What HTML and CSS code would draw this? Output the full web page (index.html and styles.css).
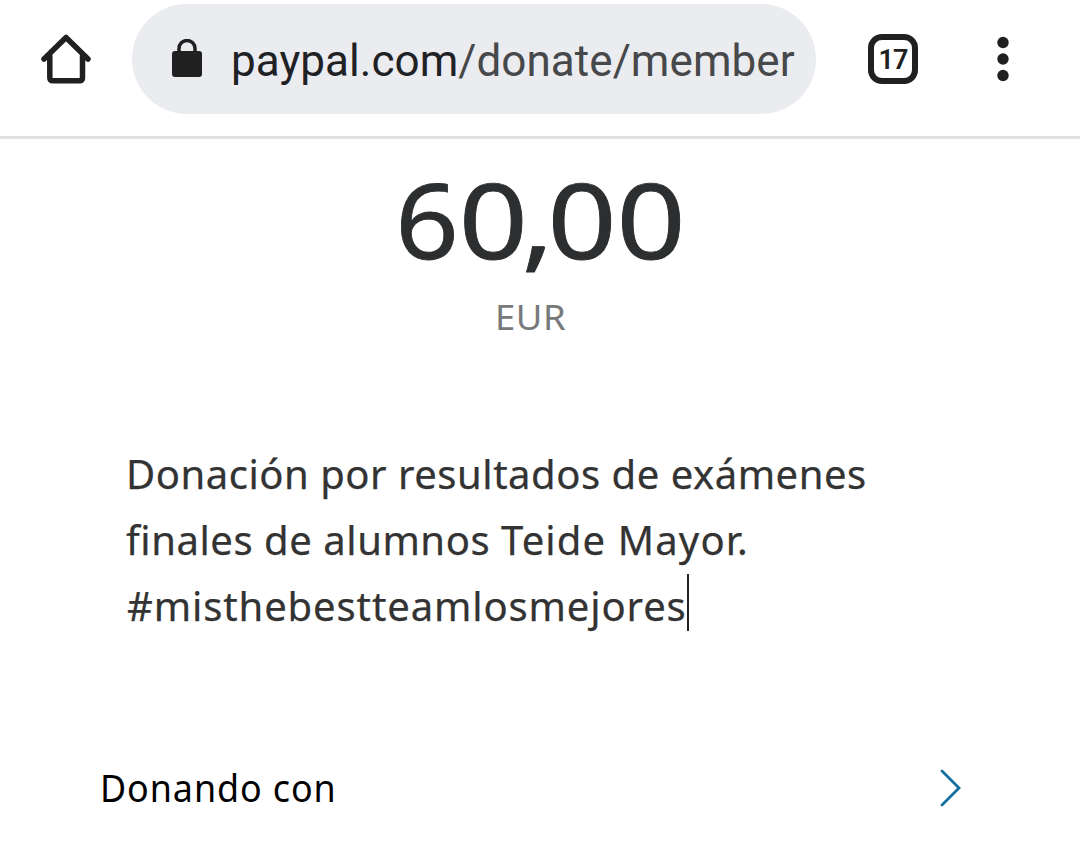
FILE: index.html
```html
<!DOCTYPE html>
<html lang="es">
<head>
<meta charset="utf-8">
<title>Donar</title>
<link rel="stylesheet" href="styles.css">
</head>
<body>
<header class="toolbar">
  <svg class="home" viewBox="0 0 52 52"><path d="M9.800 23V44.500Q9.800 47.800 13 47.800H39.500Q42.500 47.800 42.500 44.500V23M4 26 26 4.500 48 26" fill="none" stroke="#202020" stroke-width="5.500" stroke-linecap="round" stroke-linejoin="round"/></svg>
  <div class="address">
    <svg class="lock" viewBox="0 0 30 38"><rect y="12" width="30" height="26" rx="3" fill="#202020"/><path d="M7 14V9.500a8 8 0 0 1 16 0V14" fill="none" stroke="#202020" stroke-width="3.500"/></svg>
    <span class="url">paypal.com<span class="path">/donate/member</span></span>
  </div>
  <div class="tabs">17</div>
  <svg class="menu" viewBox="0 0 12 46"><g fill="#202020"><circle cx="6" cy="6.500" r="5.700"/><circle cx="6" cy="23" r="5.700"/><circle cx="6" cy="39.500" r="5.700"/></g></svg>
</header>
<main class="page">
  <div class="amount"><span class="number"><span class="lead">6</span><span class="tight">0,</span>00</span></div>
  <div class="currency"><span class="code">EUR</span></div>
  <div class="note">
    <div class="line first">Donación por resultados de exámenes</div>
    <div class="line second">finales de alumnos <span class="name">Teide Mayor.</span></div>
    <div class="line third">#misthebestteamlosmejores<span class="caret"></span></div>
  </div>
  <div class="funding">
    <span class="label">Donando con</span>
    <svg class="chevron" viewBox="0 0 22 38"><path d="M2 2 19 19 2 36" fill="none" stroke="#146f9f" stroke-width="2.800" stroke-linecap="round" stroke-linejoin="miter"/></svg>
  </div>
</main>
</body>
</html>
```

FILE: styles.css
```css
* { box-sizing: border-box; }
body { margin: 0; width: 1080px; height: 865px; overflow: hidden; background: #fff; font-family: "Noto Sans", sans-serif; }
svg { display: block; flex: none; }
.toolbar { display: flex; height: 139px; padding: 4px 0 0 40px; border-bottom: 3px solid #e1e1e3; }
.home { width: 52px; height: 52px; margin: 29px 40px 0 0; }
.address { display: flex; width: 684px; height: 110px; padding-left: 40px; border-radius: 55px; background: #ebecf0; }
.lock { width: 30px; height: 38px; margin-top: 35px; }
.url { margin-left: 29px; font: 44px/114px Roboto, sans-serif; letter-spacing: 0.05px; color: #202124; white-space: nowrap; }
.path { color: #474849; }
.tabs { width: 50px; height: 50px; margin: 30px 0 0 52px; border: 6px solid #202020; border-radius: 14px; font: 600 27px/40px Roboto, sans-serif; letter-spacing: -1px; text-align: center; color: #202020; }
.menu { width: 12px; height: 46px; margin: 32px 0 0 79px; }
.amount { height: 152px; display: flex; justify-content: center; padding-right: 4px; }
.number { font-size: 105px; line-height: 160px; color: #2c2e2f; white-space: nowrap; transform: scaleX(1.15); -webkit-text-stroke: 0.8px #2c2e2f; }
.lead { display: inline-block; transform: scaleX(0.92); transform-origin: right; }
.tight { letter-spacing: -5.5px; }
.currency { height: 54px; padding-left: 495px; font-size: 34px; line-height: 52px; letter-spacing: 0.5px; color: #77797a; }
.code { display: inline-block; transform: scaleX(1.07); transform-origin: left; }
.note { padding: 96px 0 0 126px; color: #333; font-size: 40px; -webkit-text-stroke: 0.25px #333; }
.line { height: 66px; line-height: 66px; white-space: nowrap; }
.first { letter-spacing: 0.53px; }
.second { letter-spacing: 0.55px; font-variant-ligatures: none; }
.name { letter-spacing: 1.15px; }
.third { display: flex; padding-left: 1px; letter-spacing: 0.88px; }
.caret { width: 2px; height: 57px; margin-top: 1px; background: #222; }
.funding { display: flex; justify-content: space-between; padding: 115px 118px 0 100px; }
.label { font-size: 39px; line-height: 66px; letter-spacing: 1px; color: #000; transform: scaleX(0.92); transform-origin: left; }
.chevron { width: 22px; height: 38px; margin-top: 15px; }
```
